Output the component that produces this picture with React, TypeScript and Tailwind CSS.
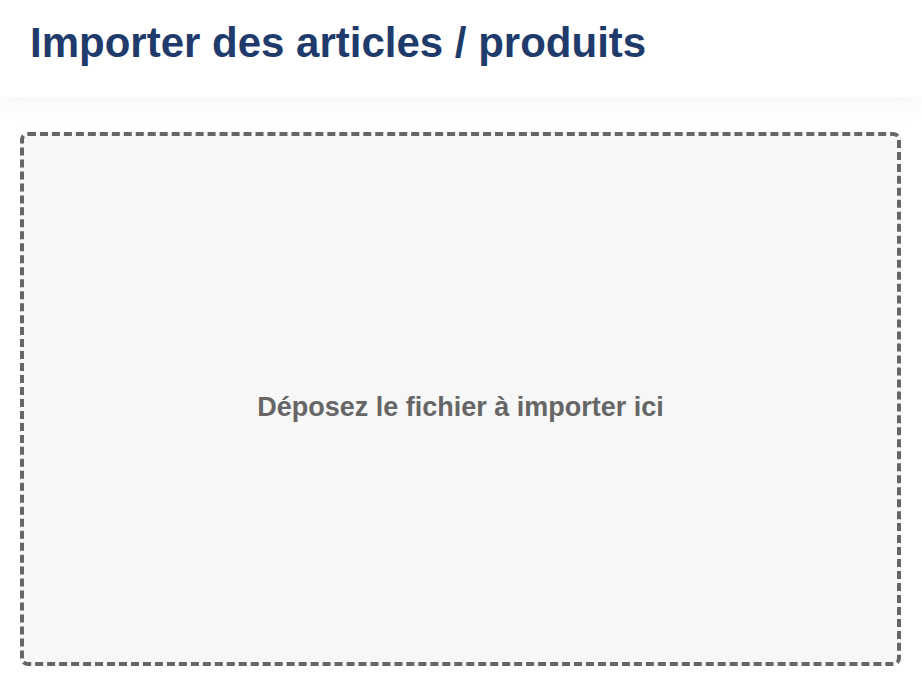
export default function App() {
  return (
    <div className="h-[687px] w-full bg-white flex flex-col overflow-hidden" style={{ fontFamily: '"Liberation Sans", Arial, sans-serif' }}>
      {/* Page header */}
      <div className="h-[97px] shrink-0 bg-white px-[30px] flex items-center relative z-10 shadow-[0_8px_24px_rgba(0,0,0,0.04)]">
        <h1 className="text-[42px] font-bold text-[#1f3b6b] leading-none -mt-[11px]">Importer des articles / produits</h1>
      </div>

      {/* Drop zone */}
      <div className="flex-1 pt-[35px] pb-[21px] pl-5 pr-[21px] flex">
        <div className="flex-1 rounded-lg border-4 border-dashed border-[#666] bg-[#f7f7f7] flex items-center justify-center pt-4">
          <span className="text-[27px] font-bold text-[#666]">Déposez le fichier à importer ici</span>
        </div>
      </div>
    </div>
  );
}
